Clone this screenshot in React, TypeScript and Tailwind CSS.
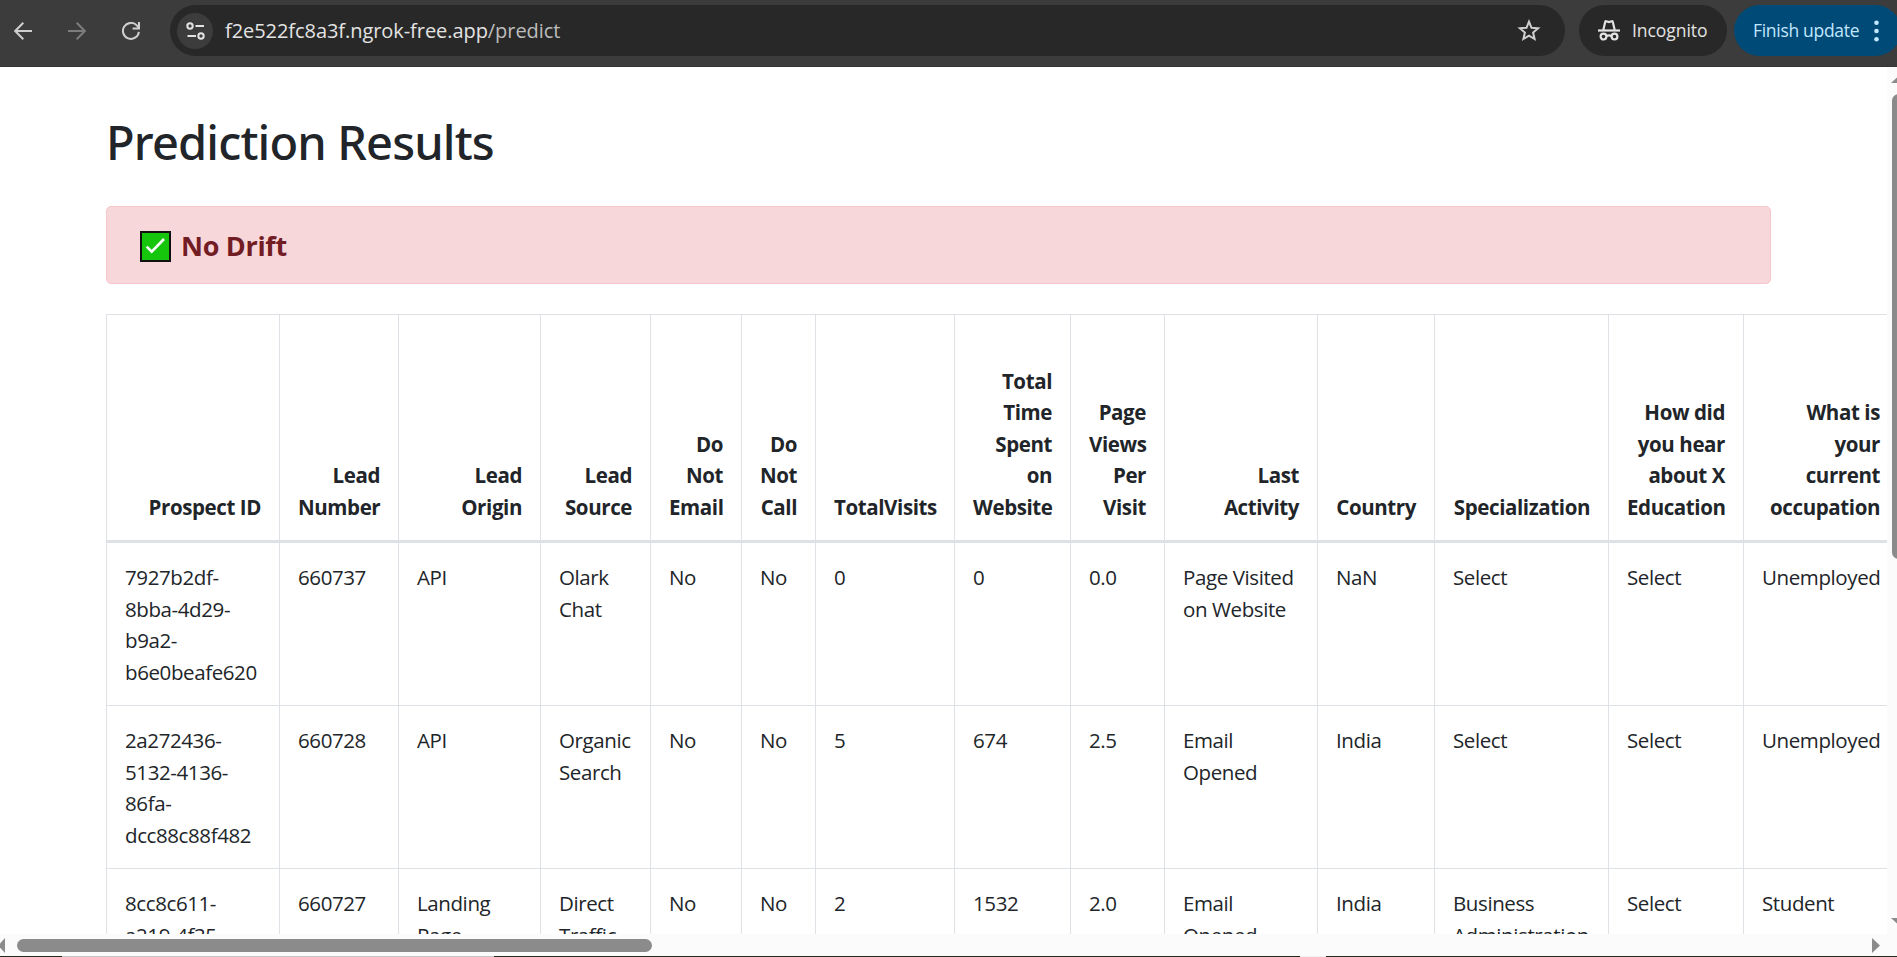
type Column = { width: string; lines: string[] };

const columns: Column[] = [
  { width: "w-[173px]", lines: ["Prospect ID"] },
  { width: "w-[119px]", lines: ["Lead", "Number"] },
  { width: "w-[142px]", lines: ["Lead", "Origin"] },
  { width: "w-[110px]", lines: ["Lead", "Source"] },
  { width: "w-[91px]", lines: ["Do", "Not", "Email"] },
  { width: "w-[74px]", lines: ["Do", "Not", "Call"] },
  { width: "w-[139px]", lines: ["TotalVisits"] },
  { width: "w-[116px]", lines: ["Total", "Time", "Spent", "on", "Website"] },
  { width: "w-[94px]", lines: ["Page", "Views", "Per", "Visit"] },
  { width: "w-[153px]", lines: ["Last", "Activity"] },
  { width: "w-[117px]", lines: ["Country"] },
  { width: "w-[174px]", lines: ["Specialization"] },
  { width: "w-[135px]", lines: ["How did", "you hear", "about X", "Education"] },
  { width: "w-[155px]", lines: ["What is", "your", "current", "occupation"] },
];

const rows: string[][][] = [
  [
    ["7927b2df-", "8bba-4d29-", "b9a2-", "b6e0beafe620"],
    ["660737"], ["API"], ["Olark", "Chat"], ["No"], ["No"], ["0"], ["0"], ["0.0"],
    ["Page Visited", "on Website"], ["NaN"], ["Select"], ["Select"], ["Unemployed"],
  ],
  [
    ["2a272436-", "5132-4136-", "86fa-", "dcc88c88f482"],
    ["660728"], ["API"], ["Organic", "Search"], ["No"], ["No"], ["5"], ["674"], ["2.5"],
    ["Email", "Opened"], ["India"], ["Select"], ["Select"], ["Unemployed"],
  ],
  [
    ["8cc8c611-", "a219-4f35-"],
    ["660727"], ["Landing", "Page"], ["Direct", "Traffic"], ["No"], ["No"], ["2"], ["1532"], ["2.0"],
    ["Email", "Opened"], ["India"], ["Business", "Administration"], ["Select"], ["Student"],
  ],
];

function Lines({ lines }: { lines: string[] }) {
  return (
    <>
      {lines.map((line) => (
        <div key={line} className="whitespace-nowrap">{line}</div>
      ))}
    </>
  );
}

function Toolbar() {
  return (
    <header className="flex h-[67px] shrink-0 items-start overflow-hidden border-b border-[#343434] bg-[#3c3c3c] pt-[5px]">
      <div className="flex h-[51px] w-[170px] shrink-0 items-center pl-[14px]">
        <svg className="h-[18px] w-[18px] shrink-0" viewBox="0 0 18 18" fill="none" stroke="#cfcfcf" strokeWidth="2">
          <path d="M18 9H1.5M9.3 0.8L1.2 9l8.1 8.2" />
        </svg>
        <svg className="ml-9 h-[18px] w-[18px] shrink-0" viewBox="0 0 18 18" fill="none" stroke="#7d7d7d" strokeWidth="2">
          <path d="M0 9h16.5M8.7 0.8L16.8 9l-8.1 8.2" />
        </svg>
        <svg className="ml-9 h-[18px] w-[18px] shrink-0" viewBox="0 0 18 18" fill="none" stroke="#cfcfcf" strokeWidth="2">
          <path d="M16.9 9.8A8 8 0 1 1 14.8 3.4L17 5.8M17 0v6.6h-6.4" />
        </svg>
      </div>
      <div className="flex h-[51px] w-[1395px] shrink-0 items-center rounded-full bg-[#282828] pl-[7px] pr-6">
        <div className="flex h-9 w-9 items-center justify-center rounded-full bg-[#3c3c3c]">
          <svg className="h-[18px] w-[19px]" viewBox="0 0 19 18" fill="none" stroke="#e3e3e3" strokeWidth="2">
            <circle cx="4" cy="4" r="2.7" />
            <circle cx="15" cy="14" r="2.7" />
            <path d="M9.5 4H18M1.5 14H10" />
          </svg>
        </div>
        <div className="ml-[12px] text-[20px] tracking-[-0.06px] text-[#e3e3e3]">
          f2e522fc8a3f.ngrok-free.app<span className="text-[#bdbdbd]">/predict</span>
        </div>
        <svg className="ml-auto h-[23px] w-6" viewBox="0 0 24 23" fill="none" stroke="#cfcfcf" strokeWidth="2">
          <path d="M12 2.7l2.5 6.1 6.6.5-5 4.3 1.5 6.4L12 16.6 6.4 20l1.5-6.4-5-4.3 6.6-.5z" />
        </svg>
      </div>
      <div className="ml-[14px] flex h-[51px] w-[148px] shrink-0 items-center rounded-full bg-[#282828] pl-[19px]">
        <svg className="h-[21px] w-[22px]" viewBox="0 0 22 21" fill="none" stroke="#e3e3e3" strokeWidth="2.2">
          <path d="M0 10.5h22" />
          <path d="M5.3 10L7.2 1.9q.2-.9 1.100-.6l2.7.8 2.700-.8q.9-.3 1.100.6L16.700 10" />
          <circle cx="5.500" cy="16.600" r="2.900" />
          <circle cx="16.500" cy="16.600" r="2.900" />
          <path d="M8.3 16.2q2.700-1.600 5.400 0" />
        </svg>
        <span className="ml-[12px] text-[17.5px] tracking-[-0.05px] text-[#e3e3e3]">Incognito</span>
      </div>
      <div className="ml-[7px] flex h-[51px] w-[167px] shrink-0 items-center rounded-full bg-[#004a77] pl-[19px]">
        <span className="w-[121px] shrink-0 whitespace-nowrap text-[17.5px] tracking-[-0.3px] text-[#c2e7ff]">Finish update</span>
        <svg className="h-[22px] w-[5px] shrink-0" viewBox="0 0 5 22" fill="#c2e7ff">
          <circle cx="2.5" cy="2.8" r="2.3" />
          <circle cx="2.5" cy="11" r="2.3" />
          <circle cx="2.5" cy="19.2" r="2.3" />
        </svg>
      </div>
    </header>
  );
}

function ResultsTable() {
  return (
    <table className="mt-[30px] w-[1792px] table-fixed border-separate border-spacing-0 border-t border-[#dee2e6] text-[20.5px] leading-[31.5px] tracking-[-0.4px]">
      <thead>
        <tr className="h-[228px]">
          {columns.map((column, i) => (
            <th key={i} className={`${column.width} border-b-[3px] border-l border-[#dee2e6] px-[18px] pb-[17px] text-right align-bottom font-bold`}>
              <Lines lines={column.lines} />
            </th>
          ))}
        </tr>
      </thead>
      <tbody>
        {rows.map((row, r) => (
          <tr key={r} className="h-[163px]">
            {row.map((cell, c) => (
              <td key={c} className="border-b border-l border-[#dee2e6] px-[18px] pt-[19px] align-top">
                <Lines lines={cell} />
              </td>
            ))}
          </tr>
        ))}
      </tbody>
    </table>
  );
}

export default function App() {
  return (
    <div className="flex h-[957px] w-[1897px] flex-col overflow-hidden bg-white font-['Open_Sans','Noto_Sans',sans-serif] text-[#212529]">
      <Toolbar />
      <div className="flex h-[867px] shrink-0">
        <main className="h-full w-[1887px] shrink-0 overflow-hidden pl-[106px]">
          <h1 className="mt-[47px] h-[56px] whitespace-nowrap font-['Noto_Sans',sans-serif] text-[47px] font-medium leading-[56px] tracking-[-0.85px]">
            Prediction Results
          </h1>
          <div className="mt-[36px] flex h-[78px] w-[1665px] items-center rounded-[5px] border border-[#f5c6cb] bg-[#f8d7da] pl-[33px] pt-[2px]">
            <svg className="h-[31px] w-[31px]" viewBox="0 0 31 31" fill="none">
              <rect x="1" y="1" width="29" height="29" fill="#16c60c" stroke="#111" strokeWidth="2" />
              <path d="M6.7 15.6l5 5L24 8" stroke="#fff" strokeWidth="2.6" />
            </svg>
            <span className="ml-[10px] text-[27px] font-bold tracking-[-0.3px] text-[#721c24]">No Drift</span>
          </div>
          <ResultsTable />
        </main>
        <div className="flex w-[10px] shrink-0 flex-col overflow-hidden bg-[#fbfbfb] pt-[10px]">
          <svg className="ml-1 h-[6px] w-[14px] shrink-0" viewBox="0 0 14 6" fill="#8b8b8b">
            <path d="M0 6L6.5 0h1L14 6z" />
          </svg>
          <div className="ml-[5px] mt-[11px] h-[465px] w-[13px] shrink-0 rounded-full bg-[#8b8b8b]" />
          <svg className="mb-[10px] ml-1 mt-auto h-[6px] w-[14px] shrink-0" viewBox="0 0 14 6" fill="#8b8b8b">
            <path d="M0 0h14L7.5 6h-1z" />
          </svg>
        </div>
      </div>
      <div className="flex h-[22px] shrink-0 items-center bg-[#fbfbfb]">
        <svg className="h-[15px] w-[5px]" viewBox="0 0 5 15" fill="#8b8b8b">
          <path d="M5 0v15L0 9.5v-4z" />
        </svg>
        <div className="ml-3 h-[13px] w-[635px] rounded-full bg-[#8b8b8b]" />
        <svg className="ml-auto mr-[17px] h-[15px] w-2" viewBox="0 0 8 15" fill="#8b8b8b">
          <path d="M0 0l8 7.5L0 15z" />
        </svg>
      </div>
      <div className="flex h-px shrink-0 bg-[#25291c]">
        <div className="ml-[62px] w-[432px] bg-[#c4c4c4]" />
        <div className="ml-[806px] w-[26px] bg-[#f0f0f0]" />
      </div>
    </div>
  );
}
